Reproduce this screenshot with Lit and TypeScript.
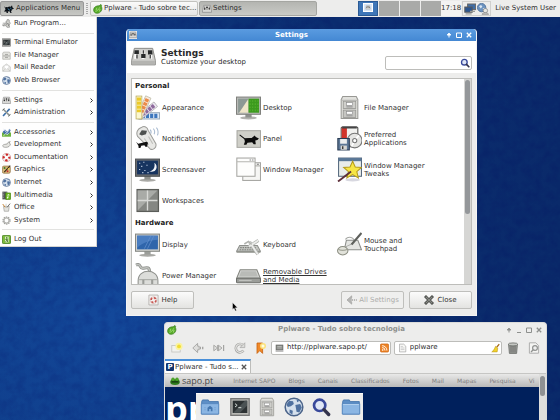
import { LitElement, html, css, nothing, type TemplateResult } from "lit";
import { customElement, property } from "lit/decorators.js";

/* ---------- icons ---------- */

const small: Record<string, TemplateResult> = {
  mouse: html`<svg viewBox="0 0 12 12"><path d="M0 2.5l1.6 1.7L3 3.6l1.6.3L6 3l2.2.4 1.4-1.9.6 2.6L12 5.4l-2.3 1.1-1.3 2.9.9 1.5H7.8L6.5 8.7l-2 .2.3 2H3.2l-.6-2.3-1.8.9L.5 8.3l1.4-2z" fill="#0b1016"/><path d="M4.5 5.6L7 7.5M7.5 4.8L9 6" stroke="#4795c4" stroke-width="1.1"/></svg>`,
  run: html`<svg viewBox="0 0 12 12"><path d="M6.5 2.6a1.6 1.6 0 1 1 3 .3L11 5.6 9.6 8 10 11H6.6l-.9-2.2-4.4.4 1.9-2.5 2.3-.6zM4 4.4l2-.8M1 5.6h3M0 8h2" fill="#d4d4d0" stroke="#868684" stroke-width=".9"/><path d="M5.2 7.3l3-1.5.6 3.5" fill="none" stroke="#6c6c6a" stroke-width=".9"/></svg>`,
  terminal: html`<svg viewBox="0 0 12 12"><rect x=".5" y="1" width="11" height="10" fill="#b9b9b5" stroke="#777" stroke-width=".8"/><rect x="1.6" y="2.2" width="8.8" height="7.4" fill="#2c3133"/><path d="M2 9.4L9 2.300h1.200v3L6 9.500z" fill="#4b5254"/><path d="M3 4l1.3 1L3 6M5 6.4h1.800" stroke="#d5dcd8" stroke-width=".6" fill="none"/></svg>`,
  cabinet: html`<svg viewBox="0 0 12 12"><path d="M2 1.5h8l1 1.5v8H1V3z" fill="#e4e4e0" stroke="#a2a29e" stroke-width=".8"/><path d="M1.6 6.6h8.8M4 4.6h4M4 8.6h4" stroke="#949490" stroke-width="1"/></svg>`,
  mail: html`<svg viewBox="0 0 12 12"><path d="M1 5l5-3.6L11 5v6H1z" fill="#efefec" stroke="#b4b4b0" stroke-width=".8"/><path d="M3 3h6v4L6 8.6 3 7z" fill="#fff" stroke="#c4c4c4" stroke-width=".6"/><path d="M1 11l4-3.6M11 11L7 7.4" stroke="#b4b4b0" stroke-width=".7"/></svg>`,
  globe: html`<svg viewBox="0 0 12 12"><circle cx="6" cy="6" r="5.3" fill="#d5e0ec" stroke="#4b648a" stroke-width=".9"/><path d="M3 2.3l2.4.3.5 1.6-1.8 1.4L2.3 6 1.4 4.6zM6.8 4.8l2.9-.6 1 2.1-1.5 3-1.7-.4-.3-2zM3.4 7.5l1.9.7-.3 2.3-1.7-1zM7.5 1.4l1.8.9-1.4.8z" fill="#50719f"/></svg>`,
  settings: html`<svg viewBox="0 0 12 12"><path d="M2 1.6h8l1.4 6.6V10H.6V8.2z" fill="#d9d9d6" stroke="#888" stroke-width=".8"/><path d="M3.2 3v4M6 3v4M8.8 3v4" stroke="#666" stroke-width="1"/><path d="M2.3 5.2h1.8v1.4H2.3zM5 3.3h2v1.4H5zM7.9 5h1.8v1.4H7.9z" fill="#333"/></svg>`,
  tools: html`<svg viewBox="0 0 12 12"><path d="M1.4 1.4l8.8 8.8" stroke="#8c928e" stroke-width="2"/><path d="M10.2 1.2L6.6 5M5 6.6L1.4 10.6" stroke="#3b6ea8" stroke-width="2.2"/><path d="M.6 3.4l2.8-2.8M8.4 11.2l3-2.7" stroke="#5f6664" stroke-width="1.2"/></svg>`,
  accessories: html`<svg viewBox="0 0 12 12"><rect x="0" y="6" width="12" height="5.6" fill="#6cb33d"/><path d="M1 5l3-3 3 3 3-4 1.5 2-2 5-3 .6-4-.6z" fill="#446fa8"/><path d="M2 1l4 5M10 2L6 7" stroke="#dfe8f2" stroke-width="1.1"/><path d="M2 10.6l3-3.4 2 2 2-2.6" stroke="#e9f4df" stroke-width="1" fill="none"/></svg>`,
  development: html`<svg viewBox="0 0 12 12"><path d="M.8 7.5C2 5.6 5 5.6 7 5.4 7 3.8 8.4 2.4 11 2.2L9.4 4l1.8 1.2C11 8 8.6 9.8 5 9.8c-2.6 0-4-.9-4.2-2.3z" fill="#e6e6e2" stroke="#8b8b87" stroke-width=".9"/></svg>`,
  help: html`<svg viewBox="0 0 12 12"><circle cx="6" cy="6" r="3.8" fill="none" stroke="#f3f3f1" stroke-width="3"/><circle cx="6" cy="6" r="3.8" fill="none" stroke="#cf2929" stroke-width="3" stroke-dasharray="3 2.97" stroke-dashoffset="1.5"/><circle cx="6" cy="6" r="5.4" fill="none" stroke="#b55" stroke-width=".5"/></svg>`,
  graphics: html`<svg viewBox="0 0 12 12"><rect x=".5" y="1.4" width="10.6" height="9.6" rx="2" fill="#d9b87c" stroke="#7d5f2e" stroke-width=".8"/><circle cx="3.4" cy="4" r="1.4" fill="#3b7a2e"/><circle cx="7.4" cy="8.4" r="1.3" fill="#c32b2b"/><path d="M11 .8L3 9.6" stroke="#372a18" stroke-width="1.5"/><circle cx="8.8" cy="5" r="1.1" fill="#f0d53d"/></svg>`,
  multimedia: html`<svg viewBox="0 0 12 12"><rect x=".5" y=".8" width="6.6" height="10.4" fill="#54575a"/><path d="M1.6 2v8M6 2v8" stroke="#ddd" stroke-width=".9" stroke-dasharray="1 1"/><rect x="5" y="2.6" width="6.6" height="8.8" fill="#69b51d" stroke="#3f7a0c" stroke-width=".7"/><path d="M8 9V4.6l2 .8" stroke="#fff" fill="none"/><circle cx="7.4" cy="9" r="1" fill="#fff"/></svg>`,
  office: html`<svg viewBox="0 0 12 12"><path d="M2 4.6h7.6L8.8 11H3z" fill="#e3e3df" stroke="#92928e" stroke-width=".8"/><path d="M1 1.4l3.2 4.4" stroke="#c78434" stroke-width="1.3"/><path d="M10.8.8L6.6 6" stroke="#6d6d69" stroke-width="1.3"/><path d="M5.4 1v4" stroke="#c9c9c4" stroke-width="1.2"/></svg>`,
  gear: html`<svg viewBox="0 0 12 12"><circle cx="6" cy="6" r="4.6" fill="none" stroke="#9a9a96" stroke-width="1.8" stroke-dasharray="1.8 1.09"/><circle cx="6" cy="6" r="3.4" fill="none" stroke="#b4b4b0" stroke-width="1.7"/></svg>`,
  logout: html`<svg viewBox="0 0 12 12"><rect x=".6" y=".6" width="10.8" height="10.8" rx="1" fill="#7dbb3c" stroke="#3c7a12"/><path d="M4.2 2.2h4.6v7.6H4.2" fill="#eef7e4"/><circle cx="6.4" cy="3.6" r="1" fill="#3c7a12"/><path d="M6.4 4.6v2.6l1.6 2.4M6.4 7L4.6 9.6M4.2 5.8l4-.3" stroke="#3c7a12" stroke-width="1"/></svg>`,
  leaf: html`<svg viewBox="0 0 12 12"><path d="M9.6.6C11 2 9.8 2.6 10.2 3.4c1.6 3-.8 7.6-5 7.8C1.6 11.2.4 8.6.8 6.4 1.2 3.6 4 2 7.2 2.2 8.2 2.2 8.4.8 9.6.6z" fill="#58ac2a" stroke="#35781a" stroke-width=".8"/><path d="M3 9c2-.6 4-2.4 5-5M4.6 4.6l-1 3M7.6 9l.8-3" stroke="#a5dd7c" stroke-width="1" fill="none"/></svg>`,
  screens: html`<svg viewBox="0 0 12 12"><rect x="3.6" y="1" width="8" height="5.6" fill="#3f6ea8" stroke="#666"/><rect x=".8" y="4" width="7.4" height="5.2" fill="#2a5590" stroke="#5a5a5a"/><path d="M1.6 10.8h6M6 8.4h5" stroke="#9a9a96" stroke-width="1.2"/></svg>`,
  net: html`<svg viewBox="0 0 12 12"><circle cx="4.6" cy="4.6" r="4.2" fill="#6c93c0" stroke="#456a97" stroke-width=".8"/><path d="M2 3.2l2-1.2 1.4 1.4-1.6 2zM5.4 5.4l2-.6.4 2z" fill="#dbe7f3"/><circle cx="8.4" cy="7.6" r="2.2" fill="#e8e8e4" stroke="#888" stroke-width=".8"/><path d="M5 11.4c.2-2.2 6.4-2.2 6.6 0z" fill="#c6c6c2" stroke="#888" stroke-width=".6"/></svg>`,
  magnifier: html`<svg viewBox="0 0 12 12"><circle cx="5.2" cy="5" r="3.4" fill="#dfe6f6" stroke="#39499b" stroke-width="1.600"/><path d="M7.8 7.6l2.8 2.9" stroke="#34344c" stroke-width="2" stroke-linecap="round"/></svg>`,
  backMuted: html`<svg viewBox="0 0 14 12"><path d="M6.6 1L1 6l5.6 5V8.4L4.6 6l2-2.4z" fill="#b7b7b5" stroke="#a0a09e" stroke-width=".8"/><path d="M6 6h2.4M9.4 6h1.4M12 6h1" stroke="#a6a6a4" stroke-width="2"/></svg>`,
  close: html`<svg viewBox="0 0 12 12"><path d="M2.4 2.4l7.2 7.2M9.6 2.4L2.4 9.6" stroke="#454744" stroke-width="3.4" stroke-linecap="square"/><path d="M2.4 2.4l7.2 7.2M9.6 2.4L2.4 9.6" stroke="#888a85" stroke-width="1.4" stroke-linecap="square"/></svg>`,
  helpPage: html`<svg viewBox="0 0 12 12"><path d="M1 .6h10v10.8H1z" fill="#f4f2f0" stroke="#a9a5a2" stroke-width=".8"/><circle cx="6" cy="6.2" r="2.7" fill="none" stroke="#c8504a" stroke-width="1.9" stroke-dasharray="2.4 1.84"/><circle cx="6" cy="6.2" r="3.7" fill="none" stroke="#c99" stroke-width=".5"/></svg>`,
  newTab: html`<svg viewBox="0 0 12 12"><rect x=".8" y="3.4" width="8.4" height="6.6" fill="#f2f2ee" stroke="#c2c2be" stroke-width=".8"/><circle cx="8" cy="4.4" r="3.6" fill="#faf3a0"/><circle cx="8" cy="4.4" r="1.9" fill="#f1dc32"/></svg>`,
  back: html`<svg viewBox="0 0 12 12"><path d="M5.6 1.4L.8 6l4.8 4.6V7.8h1.6V4.2H5.6z" fill="#dededc" stroke="#a4a4a2" stroke-width=".9"/><path d="M8 6h1M10 6h1.4" stroke="#a4a4a2" stroke-width="2.6"/></svg>`,
  skip: html`<svg viewBox="0 0 12 12"><path d="M.8 3.2L4.6 6 .8 8.8zM5.4 3.2L9 6 5.4 8.8z" fill="#e0e0de" stroke="#a4a4a2" stroke-width=".9"/><path d="M4.8 3v6M10.6 3v6" stroke="#a4a4a2" stroke-width="1.2"/></svg>`,
  reload: html`<svg viewBox="0 0 12 12"><path d="M9.4 8.6A4.2 4.2 0 1 1 9 3.2" fill="none" stroke="#a4a4a2" stroke-width="2.6"/><path d="M9.4 8.6A4.2 4.2 0 1 1 9 3.2" fill="none" stroke="#e4e4e2" stroke-width="1.200"/><path d="M10.8.8v4.8H6z" fill="#dcdcda" stroke="#a4a4a2" stroke-width=".7"/></svg>`,
  bookmark: html`<svg viewBox="0 0 12 12"><path d="M2 1h5.6v10.4L4.8 8.6 2 11.4z" fill="#f08a2a" stroke="#c65f0c" stroke-width=".8"/><circle cx="8" cy="4" r="3" fill="#fbe27c"/><circle cx="8" cy="4" r="1.5" fill="#fffbe0"/></svg>`,
  drive: html`<svg viewBox="0 0 12 12"><rect x="1.4" y="2" width="9.2" height="6.4" fill="#8a8c88" stroke="#5c5e5a" stroke-width=".8"/><path d="M3 4h6M3 6h6" stroke="#c6c8c4" stroke-width=".9"/><path d="M.8 10h10.4" stroke="#777" stroke-width="1.2"/></svg>`,
  feed: html`<svg viewBox="0 0 12 12"><rect x=".6" y=".6" width="10.8" height="10.8" rx="1.4" fill="#ee8427" stroke="#c9600c" stroke-width=".9"/><circle cx="3.6" cy="8.6" r="1.1" fill="#fff"/><path d="M2.8 5.4a3.8 3.8 0 0 1 3.8 4M2.8 2.9a6.4 6.4 0 0 1 6.4 6.5" fill="none" stroke="#fff" stroke-width="1.2"/></svg>`,
  page: html`<svg viewBox="0 0 12 12"><path d="M2 .8h5.6L10.4 3.6v7.6H2z" fill="#f6f6f4" stroke="#999" stroke-width=".8"/><path d="M3.6 4h3M3.6 6h5M3.6 8h5" stroke="#bbb" stroke-width=".8"/></svg>`,
  broom: html`<svg viewBox="0 0 12 12"><path d="M11 .8L7.6 5" stroke="#a56b1b" stroke-width="1.6"/><path d="M6 3.8l3 2.6-.8 4.8H1c2-1 3.4-3.6 5-7.4z" fill="#f2d22c" stroke="#b7921a" stroke-width=".7"/></svg>`,
  trash: html`<svg viewBox="0 0 12 12"><path d="M1.6 2.4h8.8l-.8 9H2.4z" fill="#9fa19d" stroke="#666864" stroke-width=".8"/><path d="M4 4v6.6M6 4v6.6M8 4v6.6" stroke="#5f615d" stroke-width=".8"/><ellipse cx="6" cy="2.4" rx="4.8" ry="1.5" fill="#c4c6c2" stroke="#666864" stroke-width=".8"/></svg>`,
  find: html`<svg viewBox="0 0 12 12"><path d="M1.4.8h6.4l2.8 2.8v7.6H1.4z" fill="#f4f4f2" stroke="#a0a09e" stroke-width=".8"/><circle cx="7" cy="6" r="2.4" fill="#eee" stroke="#909290" stroke-width="1.2"/><path d="M5.2 7.8L3 10" stroke="#909290" stroke-width="1.4"/></svg>`,
  folder: html`<svg viewBox="0 0 24 24"><path d="M2 5.5l1-2h7l1 2h11v15H2z" fill="#5d8fc6" stroke="#3f70a8"/><path d="M1.5 8h21v12.5h-21z" fill="#8bb6e3" stroke="#5486bd"/><path d="M2.5 9h19" stroke="#b9d5f0"/></svg>`,
  home: html`<svg viewBox="0 0 24 24"><path d="M2 5.5l1-2h7l1 2h11v15H2z" fill="#5d8fc6" stroke="#3f70a8"/><path d="M1.5 8h21v12.5h-21z" fill="#8bb6e3" stroke="#5486bd"/><path d="M9 17v-4l3-2.500 3 2.500v4h-2v-2.500h-2V17z" fill="#4477b0"/><path d="M6 12v5M18 12v5" stroke="#6c9bcf" stroke-dasharray="1.500 1"/></svg>`,
};

const large: Record<string, TemplateResult> = {
  mixer: html`<svg viewBox="0 0 26 20"><path d="M3.5 1h19l2.8 12.5v4.7H.7v-4.7z" fill="#cfcfcc" stroke="#878784"/><path d="M1.2 13.8h23.6v4H1.2z" fill="#b4b4b1"/><path d="M5 3.5L4.5 12M12.5 3v9M20 3l.8 9" stroke="#fafafa" stroke-width="2.6"/><path d="M3.6 3h4.6v4H3.4zM10.6 7h4.5v4h-4.5zM17.6 3h4.5l.3 4.5h-4.7z" fill="#27292a"/><path d="M6.2 7.5v4M12.8 3v3.5M20 8v3.5" stroke="#333" stroke-width="1.3"/></svg>`,
  appearance: html`<svg viewBox="0 0 24 24"><rect x="3" y="17" width="20.5" height="6" fill="#e4eefa" stroke="#9ab"/><path d="M8 18v4M12 18v4M16 18v4M20 18v4" stroke="#3e77bd" stroke-width="3"/><g transform="rotate(52 4 21)"><rect x="1.5" y="1" width="5.5" height="21" fill="#ede7f3" stroke="#aaa" stroke-width=".7"/><path d="M4.2 3v14" stroke="#8e6a9c" stroke-width="3.7" stroke-dasharray="3 .8"/></g><g transform="rotate(24 4 21)"><rect x="1.5" y="0" width="5.5" height="22" fill="#fbeadd" stroke="#bba" stroke-width=".7"/><path d="M4.2 2v14" stroke="#ea8b4a" stroke-width="3.7" stroke-dasharray="3 .8"/></g><rect x="1" y="1" width="5.6" height="22" fill="#fbf7d0" stroke="#b7a958" stroke-width=".7"/><path d="M3.8 2.5v14" stroke="#ecc928" stroke-width="4" stroke-dasharray="3 .8"/></svg>`,
  desktop: html`<svg viewBox="0 0 24 24"><ellipse cx="12" cy="22" rx="8" ry="1.5" fill="#b2b2ae"/><path d="M9 18h6v3.5H9z" fill="#8f918d"/><rect x=".5" y="2" width="23" height="16.5" fill="#bcbdba" stroke="#7f807c"/><rect x="2" y="3.5" width="10" height="13.5" fill="#8d9994"/><path d="M12 3.5V17H3z" fill="#efe6c9"/><rect x="12" y="3.5" width="10.2" height="13.5" fill="#3c9a1e"/><path d="M13.5 5v11M16 5v11M18.5 5v11M21 5v11" stroke="#56b02f" stroke-width="1" stroke-dasharray="1.5 1.5"/></svg>`,
  cabinet: html`<svg viewBox="0 0 24 24"><path d="M5.5 1.5h13l1.500 3V22.5H4V4.5z" fill="#e1e1dd" stroke="#989894"/><path d="M4.500 5h15" stroke="#b6b6b2"/><rect x="6" y="6" width="12" height="7" fill="#cfcfcb" stroke="#969692" stroke-width=".8"/><rect x="6" y="14.5" width="12" height="7" fill="#c6c6c2" stroke="#969692" stroke-width=".8"/><rect x="9" y="7.3" width="6" height="2.6" fill="#fff" stroke="#888" stroke-width=".6"/><rect x="9" y="15.8" width="6" height="2.6" fill="#fff" stroke="#888" stroke-width=".6"/><path d="M9 11.4h6M9 20h6" stroke="#999" stroke-width="1"/></svg>`,
  notifications: html`<svg viewBox="0 0 24 24"><path d="M6 1.5C9-.5 12 1 12.5 4L20 17c1 4-2.5 6.5-5.5 5L2.500 10C.5 6 3 2.5 6 1.5z" fill="#e8e8e5" stroke="#9d9d99"/><path d="M4 8l2.500-4 5 .5-1 3.500-4 1z" fill="#4e514f"/><path d="M9 12l4 6M13 10l4 7" stroke="#bdbdb9"/><path d="M14.5 3.500c1 1 1 3 .5 4M17.5 2.500c1.500 1.500 1.500 4 .8 5.500M20.500 1.500c2 2 2 5.500 1 7.500" stroke="#a9bbd0" fill="none"/><path d="M1 15l2 2 4-1 4-1 1.500 1-1 4H10l-1-1.500-3 .5-.8 2H3.500L3.300 19z" fill="#111"/></svg>`,
  panel: html`<svg viewBox="0 0 24 24"><rect x="1" y="4.5" width="22.5" height="16" fill="#cfcfc8" stroke="#a7a7a1"/><path d="M3.500 8.500l5 4 6-.5" fill="none" stroke="#0b0b0b" stroke-width="1"/><path d="M8 12l7-.5 3-2.500 1 1.500 3 1.500-1.500 1.500-2 .5.5 3.500h-2L15.500 15.500l-4.500.5-1 2H7.500l1-3z" fill="#0b0b0b"/></svg>`,
  preferred: html`<svg viewBox="0 0 24 24"><rect x="4" y="1" width="16" height="19" rx="1" fill="#f1f1ef" stroke="#4c4c4a"/><path d="M4.5 1.5h5v16h-5z" fill="#d1342b"/><path d="M5 1.5h14" stroke="#444" stroke-width="2"/><circle cx="17" cy="14" r="7" fill="#e5e5e3" stroke="#777"/><path d="M17 14l4-5M17 14l-3 5.5" stroke="#fff" stroke-width="1.6"/><circle cx="17" cy="14" r="2" fill="#fff" stroke="#777"/><rect x=".8" y="12" width="11" height="11" fill="#5d7795" stroke="#293c55"/><rect x="3" y="12.5" width="6.5" height="4.5" fill="#eceeee"/><rect x="3.5" y="18.8" width="6" height="4" fill="#d6d6d2"/><path d="M5.5 19.5v2.5" stroke="#333" stroke-width="1.3"/></svg>`,
  screensaver: html`<svg viewBox="0 0 24 24"><ellipse cx="12" cy="22.3" rx="8" ry="1.4" fill="#a9a9a5"/><path d="M9 18h6v3.5H9z" fill="#8f918d"/><rect x=".5" y="2" width="23" height="16.5" fill="#6a6d70" stroke="#4f5254"/><rect x="2" y="3.5" width="20" height="13.2" fill="#17345f"/><path d="M18.5 5.500a4.500 4.500 0 1 1-4.800 8c3.800.4 6-4 4.800-8z" fill="#f2f4f8"/><path d="M4 6h1M8 5h1M6 9h1M11 8h1M4 12h1M9 13h1M12 15h1M7 15h1" stroke="#d7e2f2"/></svg>`,
  windows: html`<svg viewBox="0 0 24 24"><rect x="6.5" y="5.5" width="17" height="17" fill="#f6f6f4" stroke="#a5a5a1"/><path d="M6.5 8.5h17" stroke="#b5b5b1"/><path d="M20 7h2" stroke="#777"/><rect x=".8" y="1" width="17.5" height="17.5" fill="#fdfdfc" stroke="#a5a5a1"/><path d="M1 4.5h17" stroke="#b5b5b1"/><path d="M13 2.8h4" stroke="#888" stroke-dasharray="1.5 .8"/></svg>`,
  tweaks: html`<svg viewBox="0 0 24 24"><ellipse cx="15" cy="22" rx="7" ry="1.5" fill="#d8d8e0"/><rect x="1.5" y="1" width="22" height="17.5" fill="#e9ecea" stroke="#56697e"/><rect x="1.5" y="1" width="22" height="3" fill="#5a7796"/><path d="M15 4l2.500 5.500 6 .5-4.500 4 1.500 6-5.500-3.200L9.500 20l1.500-6-4.600-4 6.100-.5z" fill="#f7e645" stroke="#b59b1b"/><path d="M1 23.5L13.5 14" stroke="#5d2f3a" stroke-width="1.8"/></svg>`,
  workspaces: html`<svg viewBox="0 0 24 24"><rect x="2" y="1.5" width="20.500" height="21" fill="#858783" stroke="#5b5d59" stroke-width="1.2"/><path d="M2.500 2.500h19L2.500 21.500z" fill="#a9aba7"/><path d="M12 2.500v19M2.500 12h19" stroke="#d9dad7" stroke-width="1.3"/></svg>`,
  display: html`<svg viewBox="0 0 24 24"><ellipse cx="12" cy="22.3" rx="8" ry="1.4" fill="#a9a9a5"/><path d="M9 18h6v3.5H9z" fill="#9b9d99"/><rect x=".5" y="2" width="23" height="16.5" fill="#d2d3d0" stroke="#858783"/><rect x="2" y="3.5" width="20" height="13.2" fill="#2f65ab"/><path d="M2 3.5h20v4C14 8 8 10 2 15z" fill="#4a7dc0"/><path d="M9 16L15 4M12 16l6-12" stroke="#6390cc" stroke-width=".7"/></svg>`,
  keyboard: html`<svg viewBox="0 0 24 24"><path d="M3.5 13h17l3 5.5H.5z" fill="#c5c7c3" stroke="#8d8f8b"/><path d="M.5 18.500h23v1.500H.5z" fill="#8d8f89"/><path d="M4 15h15M3.500 17h17" stroke="#80827e" stroke-dasharray="1.5 .8"/><path d="M13 9.500l8 12M21.500 8l-9 6" stroke="#adafab" stroke-width="3"/><path d="M13 9.500l8 12M21.500 8l-9 6" stroke="#ecedeb" stroke-width="1.8"/><path d="M8 11.500l4-2.500 3 3" fill="none" stroke="#b0b2ae" stroke-width="1.5"/></svg>`,
  mouse: html`<svg viewBox="0 0 24 24"><path d="M9 8h11l3.5 9H7z" fill="#e4e5e2" stroke="#8c8e8a"/><path d="M8 7c3-3.500 9-2 8 2s-6 3-8 6" fill="none" stroke="#a5a7a3"/><ellipse cx="5.5" cy="18" rx="5" ry="4" fill="#e1e2da" stroke="#8c8e82"/><path d="M1 16.500c3 1.500 6 1.500 9 0" stroke="#a5a79b" fill="none"/><path d="M23.500 1L14 12" stroke="#5e605c" stroke-width="2"/></svg>`,
  power: html`<svg viewBox="0 0 24 24"><path d="M1 2c5-2.500 3 4 7 3s6-1 6 4" fill="none" stroke="#8e908c" stroke-width="3"/><path d="M1 2c5-2.500 3 4 7 3s6-1 6 4" fill="none" stroke="#c0c2be" stroke-width="1.4"/><path d="M3 17c0-12 19-12 19 0v4.500H3z" fill="#dcddda" stroke="#8e908c"/><path d="M4 16h17" stroke="#a6a8a4"/><path d="M8 16v7M16.500 16v7" stroke="#9b9d99" stroke-width="2"/></svg>`,
  removable: html`<svg viewBox="0 0 24 24"><path d="M4 6.500h16l3.500 8.500H.5z" fill="#d3d4d1" stroke="#83857f"/><path d="M5 8h14l2 5H3z" fill="#b9bbb7"/><rect x=".5" y="14.500" width="23" height="4.500" rx="1" fill="#9b9d99" stroke="#6d6f6b"/><path d="M3 16.700h12" stroke="#c4c6c2"/></svg>`,
};

const windowGlyph = (name: string): TemplateResult => {
  const shapes: Record<string, TemplateResult> = {
    shade: html`<svg viewBox="0 0 6 6"><path d="M3 1v4.500M1.200 3L3 1.200 4.800 3z" fill="currentColor" stroke="currentColor"/></svg>`,
    minimize: html`<svg viewBox="0 0 6 6"><path d="M1 5.5h4" stroke="currentColor"/></svg>`,
    maximize: html`<svg viewBox="0 0 6 6"><path d="M.5 1h5v4.5h-5z" fill="none" stroke="currentColor"/></svg>`,
    close: html`<svg viewBox="0 0 6 6"><path d="M.8.8l4.4 4.4M5.200.8L.8 5.200" stroke="currentColor" stroke-width="1.3"/></svg>`,
  };
  return html`<button class="glyph" aria-label=${name}>${shapes[name]}</button>`;
};

const base = css`
  * { box-sizing: border-box; }
  button, input, a {
    font: inherit;
    color: inherit;
    margin: 0;
    padding: 0;
    border: 0;
    background: none;
    text-decoration: none;
  }
  button { display: flex; align-items: center; text-align: left; white-space: nowrap; }
  input { min-width: 0; outline: none; }
  svg { display: block; width: 100%; height: 100%; }
  .icon { width: 10px; height: 10px; flex: none; }
  .glyph { width: 6px; height: 6px; flex: none; }
  .title { display: flex; align-items: center; }
  .title strong { flex: 1; text-align: center; }
`;

/* ---------- top panel ---------- */

@customElement("top-panel")
class TopPanel extends LitElement {
  static styles = [base, css`
    :host { display: block; position: relative; z-index: 2; }
    .bar {
      display: flex;
      align-items: stretch;
      height: 17px;
      padding: 1px 4px 1px 0;
      background: #ededec;
      color: #2e2e2e;
    }
    .menu, .task { border: 1px solid #c2c2be; border-radius: 2px; }
    .menu { width: 84px; gap: 2px; padding: 0 3px; border-color: #999; background: linear-gradient(#b0b1ae, #c6c7c3); }
    .handle { width: 2px; margin: 2px; border-left: 1px dotted #aaa; border-right: 1px dotted #aaa; }
    .task { width: 108px; gap: 1px; padding: 0 2px; margin-right: 1px; background: linear-gradient(#fafafa, #e6e6e4); }
    .task.on { width: 118px; background: linear-gradient(#b4b5b1, #c9cac6); border-color: #a5a6a2; }
    .pager { display: flex; gap: 1px; margin-left: auto; }
    .pager button { width: 20px; background: #a9aaa8; }
    .pager .here { padding: 1px 4px 3px; background: #3e76b8; border: 1px solid #2b5a94; }
    .pager .mini { flex: 1; align-self: stretch; background: #d8e6f5; border: 1px solid #fff; padding: 1px; }
    .clock, .tray, .user { display: flex; align-items: center; }
    .clock { width: 20px; justify-content: center; background: #f3f3f2; }
    .tray { gap: 1px; padding: 0 1px; margin: 0 4px 0 1px; border: 1px solid #d0d0ce; }
    .tray .icon { width: 12px; height: 12px; }
  `];

  render() {
    return html`<nav class="bar" aria-label="Panel">
      <button class="menu"><span class="icon">${small.mouse}</span>Applications Menu</button>
      <span class="handle"></span>
      <button class="task"><span class="icon">${small.leaf}</span>Pplware - Tudo sobre tec...</button>
      <button class="task on"><span class="icon">${small.settings}</span>Settings</button>
      <div class="pager">
        <button class="here" aria-label="Workspace 1"><span class="mini">${small.settings}</span></button>
        ${[2, 3, 4].map((n) => html`<button aria-label="Workspace ${n}"></button>`)}
      </div>
      <time class="clock">17:18</time>
      <div class="tray"><span class="icon">${small.screens}</span><span class="icon">${small.net}</span></div>
      <button class="user">Live System User</button>
    </nav>`;
  }
}

/* ---------- applications menu ---------- */

type MenuEntry = [icon: string, label: string];

@customElement("app-menu")
class AppMenu extends LitElement {
  static styles = [base, css`
    :host { display: block; }
    .menu {
      display: flex;
      flex-direction: column;
      height: 230px;
      background: #fefefe;
      border: solid #d4d4d2;
      border-width: 0 1px 1px 0;
      color: #333;
    }
    button { flex: 1; gap: 3px; padding: 0 2px; width: 100%; }
    .icon { width: 9px; height: 9px; }
    .label { flex: 1; }
    .arrow { width: 3px; height: 5px; margin-right: 1px; }
    hr { width: 92px; height: 1px; margin: 3px auto; border: 0; background: #e2e2e0; }
  `];

  private groups: { sub: boolean; items: MenuEntry[] }[] = [
    { sub: false, items: [["run", "Run Program..."]] },
    { sub: false, items: [["terminal", "Terminal Emulator"], ["cabinet", "File Manager"], ["mail", "Mail Reader"], ["globe", "Web Browser"]] },
    { sub: true, items: [["settings", "Settings"], ["tools", "Administration"]] },
    { sub: true, items: [["accessories", "Accessories"], ["development", "Development"], ["help", "Documentation"], ["graphics", "Graphics"], ["globe", "Internet"], ["multimedia", "Multimedia"], ["office", "Office"], ["gear", "System"]] },
    { sub: false, items: [["logout", "Log Out"]] },
  ];

  render() {
    return html`<div class="menu" role="menu">
      ${this.groups.map((group, i) => html`
        ${i ? html`<hr>` : nothing}
        ${group.items.map(([icon, label]) => html`<button role="menuitem">
          <span class="icon">${small[icon]}</span><span class="label">${label}</span>
          ${group.sub ? html`<span class="arrow"><svg viewBox="0 0 3 5"><path d="M.5.5l2 2-2 2" fill="none" stroke="#333"/></svg></span>` : nothing}
        </button>`)}
      `)}
    </div>`;
  }
}

/* ---------- settings manager ---------- */

@customElement("settings-item")
class SettingsItem extends LitElement {
  @property() icon = "";
  @property() label = "";
  @property({ type: Boolean }) active = false;

  static styles = [base, css`
    :host { display: block; }
    button { height: 31px; gap: 2px; white-space: normal; line-height: 8px; color: #333; }
    .pic { width: 25px; height: 25px; flex: none; }
    .text { max-width: 66px; }
    .on { text-decoration: underline; }
  `];

  render() {
    return html`<button>
      <span class="pic">${large[this.icon]}</span>
      <span class="text ${this.active ? "on" : ""}">${this.label}</span>
    </button>`;
  }
}

@customElement("settings-window")
class SettingsWindow extends LitElement {
  static styles = [base, css`
    :host { display: block; }
    .window {
      border: 1px solid #f4f4f4;
      border-top: 0;
      border-radius: 4px 4px 0 0;
      background: #ededec;
      overflow: hidden;
    }
    .title {
      height: 12px;
      gap: 4px;
      padding: 0 5px 0 3px;
      color: #fff;
      background: linear-gradient(#5a9be0, #4488d3);
      margin: 0 -1px;
    }
    .title .icon { width: 8px; height: 8px; background: #e8e8e6; }
    .head {
      display: flex;
      align-items: center;
      gap: 5px;
      height: 32px;
      padding: 0 4px;
      background: #fff;
      color: #2a2a2a;
    }
    .mixer { width: 25px; height: 20px; flex: none; }
    .head h1 { margin: 0; font-size: 9px; line-height: 10px; }
    .head p { margin: 0; line-height: 9px; }
    .names { flex: 1; }
    .search {
      display: flex;
      align-items: center;
      align-self: flex-end;
      width: 87px;
      height: 14px;
      padding: 0 1px;
      margin-bottom: 3px;
      border: 1px solid #bdbdba;
      border-radius: 2px;
      background: #fff;
    }
    .search input { flex: 1; }
    .list {
      display: flex;
      height: 207px;
      margin: 5px 4px 6px;
      border: 1px solid #bdbdba;
      background: #fff;
      overflow: hidden;
    }
    .groups { flex: 1; padding-left: 3px; }
    h2 { margin: 0; padding-top: 1px; font-size: 7px; line-height: 12px; color: #222; }
    .grid { display: grid; grid-template-columns: repeat(3, 101px); }
    .scroll { width: 7px; padding: 1px; background: #d6d6d4; }
    .thumb { height: 134px; border-radius: 3px; background: #94979a; }
    .foot { display: flex; gap: 5px; padding: 0 4px 6px; }
    .foot button {
      justify-content: center;
      gap: 3px;
      width: 63px;
      height: 18px;
      border: 1px solid #bfbfbc;
      border-radius: 2px;
      background: linear-gradient(#fbfbfb, #e3e3e1);
      color: #333;
    }
    .foot .help { margin-right: auto; }
    .foot .help .icon { width: 11px; height: 12px; }
    .foot button:disabled { gap: 1px; color: #adadab; background: #efefee; }
    .foot button:disabled .icon { width: 12px; }
  `];

  private groups: { name: string; items: [string, string, boolean?][] }[] = [
    {
      name: "Personal",
      items: [
        ["appearance", "Appearance"], ["desktop", "Desktop"], ["cabinet", "File Manager"],
        ["notifications", "Notifications"], ["panel", "Panel"], ["preferred", "Preferred Applications"],
        ["screensaver", "Screensaver"], ["windows", "Window Manager"], ["tweaks", "Window Manager Tweaks"],
        ["workspaces", "Workspaces"],
      ],
    },
    {
      name: "Hardware",
      items: [
        ["display", "Display"], ["keyboard", "Keyboard"], ["mouse", "Mouse and Touchpad"],
        ["power", "Power Manager"], ["removable", "Removable Drives and Media", true],
      ],
    },
  ];

  render() {
    return html`<section class="window" aria-label="Settings">
      <div class="title">
        <span class="icon">${small.settings}</span><strong>Settings</strong>
        ${["shade", "maximize", "close"].map(windowGlyph)}
      </div>
      <header class="head">
        <span class="mixer">${large.mixer}</span>
        <div class="names"><h1>Settings</h1><p>Customize your desktop</p></div>
        <label class="search"><input type="search" aria-label="Search settings"><span class="icon">${small.magnifier}</span></label>
      </header>
      <div class="list">
        <div class="groups">
          ${this.groups.map((g) => html`<h2>${g.name}</h2>
            <div class="grid">${g.items.map(([icon, label, active]) => html`
              <settings-item .icon=${icon} .label=${label} .active=${!!active}></settings-item>`)}</div>`)}
        </div>
        <div class="scroll"><div class="thumb"></div></div>
      </div>
      <footer class="foot">
        <button class="help"><span class="icon">${small.helpPage}</span>Help</button>
        <button disabled><span class="icon">${small.backMuted}</span>All Settings</button>
        <button><span class="icon">${small.close}</span>Close</button>
      </footer>
    </section>`;
  }
}

/* ---------- browser ---------- */

@customElement("browser-window")
class BrowserWindow extends LitElement {
  static styles = [base, css`
    :host { display: block; }
    .window {
      display: flex;
      flex-direction: column;
      height: 100%;
      border: 1px solid #dcdcda;
      border-bottom: 0;
      border-radius: 4px 4px 0 0;
      background: #ededec;
      overflow: hidden;
    }
    .title, .tools, .tab { flex: none; }
    .title { height: 13px; gap: 4px; padding: 0 4px 0 2px; color: #8e908e; }
    .tools { display: flex; align-items: center; height: 23px; padding: 0 6px; }
    .nav { display: flex; gap: 9px; margin-right: 4px; }
    .nav .icon, .side .icon { width: 12px; height: 12px; }
    .field {
      display: flex;
      align-items: center;
      gap: 3px;
      min-width: 0;
      height: 14px;
      padding: 0 1px 0 3px;
      border: 1px solid #bdbdba;
      border-radius: 2px;
      background: #fff;
      color: #2a2a2a;
    }
    .field input { flex: 1; width: 100%; }
    .field .icon { width: 9px; height: 10px; }
    .url { flex: 120; }
    .find { flex: 108; margin-left: 3px; }
    .side { display: flex; gap: 9px; margin-left: 5px; }
    .tab {
      display: flex;
      align-items: center;
      gap: 1px;
      width: 86px;
      height: 14px;
      padding: 0 3px 0 1px;
      border: 1px solid #bdbdba;
      border-width: 2px 1px 0 0;
      border-top-color: #4a90d9;
      background: #fff;
      color: #333;
    }
    .tab .name { flex: 1; white-space: nowrap; }
    .tab button { width: 6px; height: 6px; color: #555; }
    .logo { width: 8px; height: 8px; border-radius: 1px; background: #12356f; color: #fff; font-weight: bold; line-height: 8px; text-align: center; }
    .view { display: flex; flex: 1; min-height: 0; border-top: 1px solid #c6c6c4; }
    .site { flex: 1; min-width: 0; background: #00205c; overflow: hidden; }
    .links {
      display: flex;
      align-items: center;
      gap: 13px;
      height: 13px;
      padding-left: 5px;
      background: linear-gradient(#e9e9e8, #b9b9b9);
      color: #818181;
      font-size: 6px;
      white-space: nowrap;
    }
    .brand { display: flex; align-items: center; gap: 2px; margin-right: 7px; color: #4a4a4a; font: 9px/12px "Open Sans", sans-serif; }
    .brand .frog { width: 10px; height: 8px; }
    .banner { margin: 4px 0 0; color: #fff; font: bold 36px/36px "Open Sans", sans-serif; }
    .scroll { width: 7px; padding: 2px 1px; background: #dededc; }
    .thumb { height: 20px; border-radius: 3px; background: #8f9193; }
  `];

  private links = ["Internet SAPO", "Blogs", "Canais", "Classificados", "Fotos", "Mail", "Mapas", "Pesquisa", "Vi"];

  render() {
    return html`<section class="window" aria-label="Browser">
      <div class="title">
        <span class="icon">${small.leaf}</span><strong>Pplware - Tudo sobre tecnologia</strong>
        ${["shade", "minimize", "maximize", "close"].map(windowGlyph)}
      </div>
      <div class="tools">
        <div class="nav">
          ${[["newTab", "New tab"], ["back", "Back"], ["skip", "Fast forward"], ["reload", "Reload"], ["bookmark", "Bookmark"]].map(
            ([icon, label]) => html`<button class="icon" aria-label=${label}>${small[icon]}</button>`)}
        </div>
        <label class="field url"><span class="icon">${small.drive}</span>
          <input aria-label="Address" value="http://pplware.sapo.pt/"><span class="icon">${small.feed}</span></label>
        <label class="field find"><span class="icon">${small.page}</span>
          <input aria-label="Search" value="pplware"><span class="icon">${small.broom}</span></label>
        <div class="side">
          <button class="icon" aria-label="Trash">${small.trash}</button>
          <button class="icon" aria-label="Find in page">${small.find}</button>
        </div>
      </div>
      <div class="tab">
        <span class="logo">P</span><span class="name">Pplware - Tudo s...</span>
        ${windowGlyph("close")}
      </div>
      <div class="view">
        <div class="site">
          <nav class="links">
            <a class="brand" href="#sapo"><span class="frog"><svg viewBox="0 0 10 8"><ellipse cx="5" cy="5" rx="4.8" ry="2.9" fill="#2f7d1c"/><circle cx="3" cy="2.2" r="1.7" fill="#4fa52c"/><circle cx="7" cy="2.2" r="1.7" fill="#4fa52c"/><path d="M1.5 4.8h7" stroke="#15350d" stroke-width="1.2"/></svg></span>sapo.pt</a>
            ${this.links.map((l) => html`<a href="#${l}">${l}</a>`)}
          </nav>
          <div class="banner">pp</div>
        </div>
        <div class="scroll"><div class="thumb"></div></div>
      </div>
    </section>`;
  }
}

/* ---------- dock ---------- */

@customElement("bottom-dock")
class BottomDock extends LitElement {
  static styles = [base, css`
    :host { display: block; }
    .dock {
      display: flex;
      align-items: center;
      gap: 7px;
      height: 27px;
      padding: 0 4px;
      background: #ededec;
      border-top: 1px solid #fafafa;
    }
    button { width: 20px; height: 20px; flex: none; }
    .line { width: 1px; height: 24px; margin: 0 -2px; background: #c9c9c7; }
  `];

  render() {
    return html`<nav class="dock" aria-label="Launchers">
      <button aria-label="Home">${small.home}</button>
      <span class="line"></span>
      <button aria-label="Terminal">${small.terminal}</button>
      <button aria-label="File manager">${large.cabinet}</button>
      <button aria-label="Web browser">${small.globe}</button>
      <button aria-label="Application finder">${small.magnifier}</button>
      <span class="line"></span>
      <button aria-label="Folder">${small.folder}</button>
    </nav>`;
  }
}

/* ---------- desktop ---------- */

@customElement("app-root")
class AppRoot extends LitElement {
  static styles = [base, css`
    :host {
      display: block;
      position: relative;
      height: 100vh;
      overflow: hidden;
      font: 7px/9px "DejaVu Sans", sans-serif;
      background:
        radial-gradient(circle at 20% 75%, #13489a 0, #13489a00 50%),
        linear-gradient(90deg, #0e3a84, #0b2d70 60%, #0a2a6a);
    }
    .texture { position: absolute; inset: 0; opacity: 0.12; }
    .menu, .settings, .browser, .dock, .pointer { position: absolute; }
    .menu { left: 0; top: 17px; width: 97px; z-index: 1; }
    .settings { left: 126px; right: 83px; top: 29px; }
    .browser { left: 164px; right: 13px; top: 322px; bottom: 0; }
    .dock { left: 196px; right: 197px; bottom: 0; }
    .pointer { left: 232px; top: 302px; width: 6px; height: 10px; }
  `];

  render() {
    return html`
      <div class="texture"><svg><filter id="grain"><feTurbulence type="fractalNoise" baseFrequency="0.12" numOctaves="3"/>
        <feColorMatrix values="0 0 0 0 0  0 0 0 0 0  0 0 0 0 0.1  2.5 0 0 0 -0.9"/></filter>
        <rect width="100%" height="100%" filter="url(#grain)"/></svg></div>
      <top-panel></top-panel>
      <app-menu class="menu"></app-menu>
      <browser-window class="browser"></browser-window>
      <settings-window class="settings"></settings-window>
      <bottom-dock class="dock"></bottom-dock>
      <div class="pointer"><svg viewBox="0 0 6 10"><path d="M.5.5v7l1.6-1.3L3.3 9l1.2-.5L3.3 5.8h2.2z" fill="#000" stroke="#fff" stroke-width=".4"/></svg></div>
    `;
  }
}
